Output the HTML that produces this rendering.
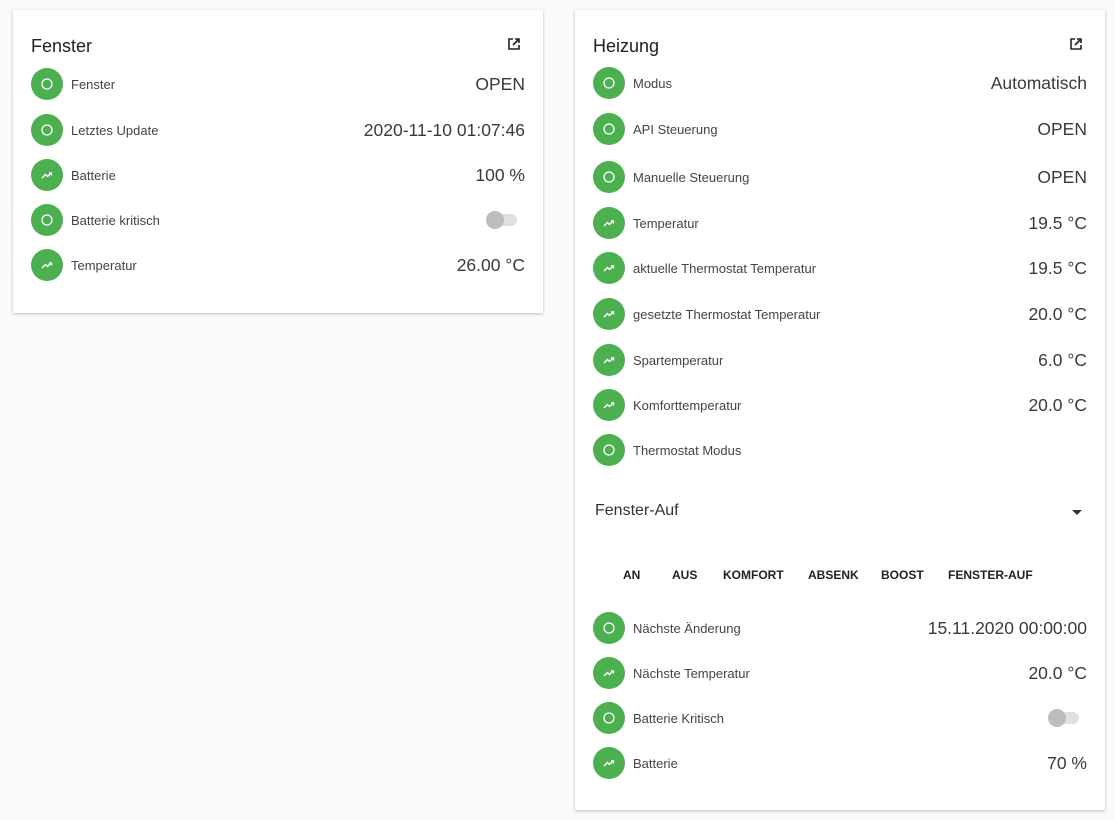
<!DOCTYPE html>
<html><head><meta charset="utf-8"><style>
body{margin:0;width:1115px;height:820px;background:#fafafa;font-family:"Liberation Sans",sans-serif;position:relative;overflow:hidden}
.card{position:absolute;background:#fff;box-shadow:0 1px 3px rgba(0,0,0,.25)}
.t{position:absolute;font-size:18px;color:#212121;font-weight:300}
.row{position:absolute;left:18px;right:18px;height:32px}
.ic{position:absolute;left:0;top:0;width:32px;height:32px;border-radius:50%;background:#4caf50}
.ic svg{position:absolute;left:8px;top:8px}
.lb{position:absolute;left:40px;top:9px;font-size:13px;color:#444}
.v{position:absolute;right:0;top:6px;font-size:17.5px;color:#3a3a3a}
.tg{position:absolute;right:8px;top:10px;width:30px;height:12px;border-radius:6px;background:#e0e0e0}
.tg:before{content:"";position:absolute;left:-1px;top:-3px;width:18px;height:18px;border-radius:50%;background:#bdbdbd}
.btn{position:absolute;font-size:12px;font-weight:bold;color:#222}
</style></head><body>
<svg width="0" height="0" style="position:absolute"><defs>
<symbol id="o" viewBox="0 0 16 16"><circle cx="8" cy="8" r="5" fill="none" stroke="#fff" stroke-width="1.3"/></symbol>
<symbol id="g" viewBox="0 0 16 16"><path d="M3 11 L6.5 7.5 L8.5 9.5 L12 6 M10 6 H12.5 V8.5" fill="none" stroke="#fff" stroke-width="1.4"/></symbol>
</defs></svg>

<div class="card" style="left:13px;top:10px;width:530px;height:303px">
<div class="t" style="left:18px;top:26px">Fenster</div>
<svg style="position:absolute;left:495px;top:28px" width="12" height="12" viewBox="0 0 12 12"><path d="M5 1H1V11H11V7M7 1H11V5M11 1L5 7" fill="none" stroke="#222" stroke-width="1.6"/></svg>
<div class="row" style="top:58px"><div class="ic"><svg width="16" height="16"><use href="#o"/></svg></div><div class="lb">Fenster</div><div class="v">OPEN</div></div>
<div class="row" style="top:104px"><div class="ic"><svg width="16" height="16"><use href="#o"/></svg></div><div class="lb">Letztes Update</div><div class="v">2020-11-10 01:07:46</div></div>
<div class="row" style="top:149px"><div class="ic"><svg width="16" height="16"><use href="#g"/></svg></div><div class="lb">Batterie</div><div class="v">100 %</div></div>
<div class="row" style="top:194px"><div class="ic"><svg width="16" height="16"><use href="#o"/></svg></div><div class="lb">Batterie kritisch</div><div class="tg"></div></div>
<div class="row" style="top:239px"><div class="ic"><svg width="16" height="16"><use href="#g"/></svg></div><div class="lb">Temperatur</div><div class="v">26.00 °C</div></div>
</div>

<div class="card" style="left:575px;top:10px;width:530px;height:800px">
<div class="t" style="left:18px;top:26px">Heizung</div>
<svg style="position:absolute;left:495px;top:28px" width="12" height="12" viewBox="0 0 12 12"><path d="M5 1H1V11H11V7M7 1H11V5M11 1L5 7" fill="none" stroke="#222" stroke-width="1.6"/></svg>
<div class="row" style="top:57px"><div class="ic"><svg width="16" height="16"><use href="#o"/></svg></div><div class="lb">Modus</div><div class="v">Automatisch</div></div>
<div class="row" style="top:103px"><div class="ic"><svg width="16" height="16"><use href="#o"/></svg></div><div class="lb">API Steuerung</div><div class="v">OPEN</div></div>
<div class="row" style="top:151px"><div class="ic"><svg width="16" height="16"><use href="#o"/></svg></div><div class="lb">Manuelle Steuerung</div><div class="v">OPEN</div></div>
<div class="row" style="top:197px"><div class="ic"><svg width="16" height="16"><use href="#g"/></svg></div><div class="lb">Temperatur</div><div class="v">19.5 °C</div></div>
<div class="row" style="top:242px"><div class="ic"><svg width="16" height="16"><use href="#g"/></svg></div><div class="lb">aktuelle Thermostat Temperatur</div><div class="v">19.5 °C</div></div>
<div class="row" style="top:288px"><div class="ic"><svg width="16" height="16"><use href="#g"/></svg></div><div class="lb">gesetzte Thermostat Temperatur</div><div class="v">20.0 °C</div></div>
<div class="row" style="top:334px"><div class="ic"><svg width="16" height="16"><use href="#g"/></svg></div><div class="lb">Spartemperatur</div><div class="v">6.0 °C</div></div>
<div class="row" style="top:379px"><div class="ic"><svg width="16" height="16"><use href="#g"/></svg></div><div class="lb">Komforttemperatur</div><div class="v">20.0 °C</div></div>
<div class="row" style="top:424px"><div class="ic"><svg width="16" height="16"><use href="#o"/></svg></div><div class="lb">Thermostat Modus</div></div>
<div style="position:absolute;left:20px;top:492px;font-size:16px;color:#333">Fenster-Auf</div>
<div style="position:absolute;left:497px;top:500px;width:0;height:0;border-left:5px solid transparent;border-right:5px solid transparent;border-top:5px solid #333"></div>
<div class="btn" style="left:48px;top:558px">AN</div>
<div class="btn" style="left:97px;top:558px">AUS</div>
<div class="btn" style="left:148px;top:558px">KOMFORT</div>
<div class="btn" style="left:233px;top:558px">ABSENK</div>
<div class="btn" style="left:306px;top:558px">BOOST</div>
<div class="btn" style="left:373px;top:558px">FENSTER-AUF</div>
<div class="row" style="top:602px"><div class="ic"><svg width="16" height="16"><use href="#o"/></svg></div><div class="lb">Nächste Änderung</div><div class="v">15.11.2020 00:00:00</div></div>
<div class="row" style="top:647px"><div class="ic"><svg width="16" height="16"><use href="#g"/></svg></div><div class="lb">Nächste Temperatur</div><div class="v">20.0 °C</div></div>
<div class="row" style="top:692px"><div class="ic"><svg width="16" height="16"><use href="#o"/></svg></div><div class="lb">Batterie Kritisch</div><div class="tg"></div></div>
<div class="row" style="top:737px"><div class="ic"><svg width="16" height="16"><use href="#g"/></svg></div><div class="lb">Batterie</div><div class="v">70 %</div></div>
</div>
</body></html>
